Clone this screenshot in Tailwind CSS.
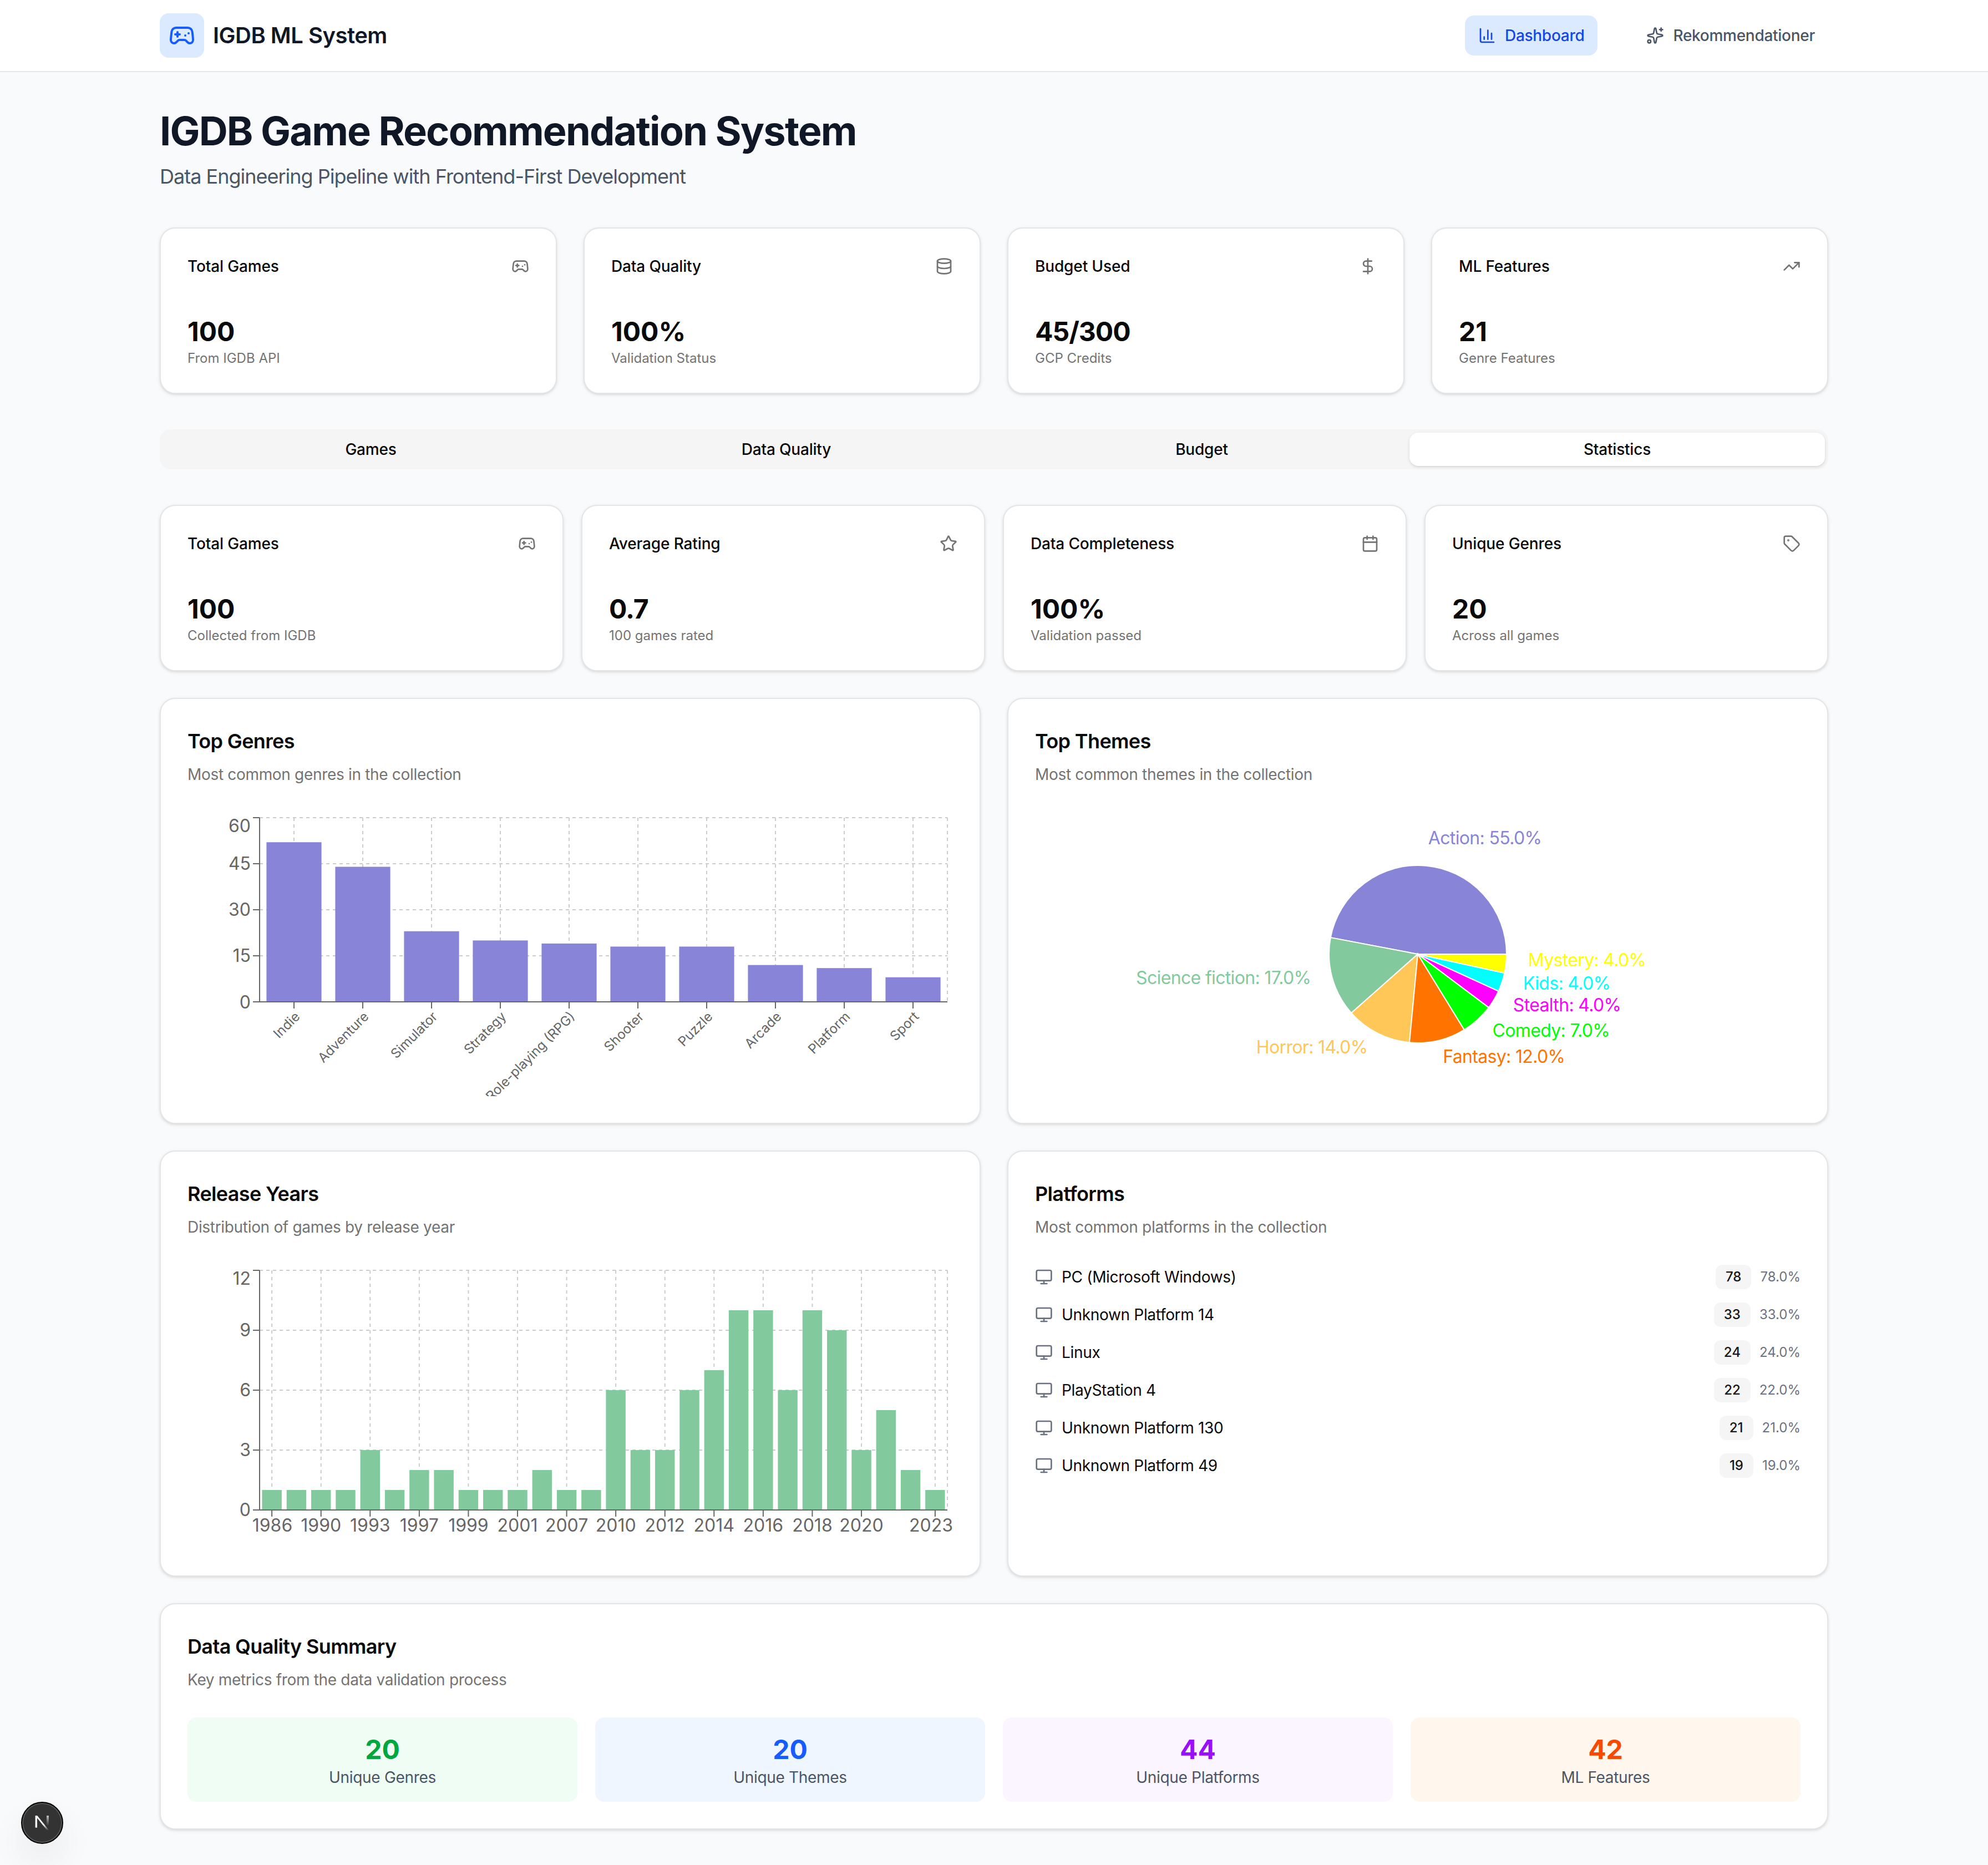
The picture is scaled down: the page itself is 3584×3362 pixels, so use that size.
<!DOCTYPE html>
<html lang="en" class="[zoom:2] [font-family:Inter,'Noto_Sans',sans-serif]">
<head>
<meta charset="utf-8">
<title>IGDB ML System</title>
<script src="https://cdn.jsdelivr.net/npm/@tailwindcss/browser@4"></script>
</head>
<body class="bg-gray-50 text-[#0a0a0a]">
<nav class="bg-white border-b border-gray-200">
  <div class="mx-[144px] h-16 flex items-center justify-between">
    <div class="flex items-center gap-2">
      <div class="p-2 rounded-lg bg-blue-100 text-blue-600">
        <svg class="w-6 h-6" viewBox="0 0 24 24" fill="none" stroke="currentColor" stroke-width="2" stroke-linecap="round" stroke-linejoin="round"><line x1="6" x2="10" y1="11" y2="11"/><line x1="8" x2="8" y1="9" y2="13"/><line x1="15" x2="15.01" y1="12" y2="12"/><line x1="18" x2="18.01" y1="10" y2="10"/><path d="M17.32 5H6.68a4 4 0 0 0-3.978 3.59c-.006.052-.01.101-.017.152C2.604 9.416 2 14.456 2 16a3 3 0 0 0 3 3c1 0 1.5-.5 2-1l1.414-1.414A2 2 0 0 1 9.828 16h4.344a2 2 0 0 1 1.414.586L17 18c.5.5 1 1 2 1a3 3 0 0 0 3-3c0-1.545-.604-6.584-.685-7.258-.007-.05-.011-.1-.017-.151A4 4 0 0 0 17.32 5z"/></svg>
      </div>
      <span class="text-xl font-semibold text-gray-900 tracking-[-0.25px]">IGDB ML System</span>
    </div>
    <div class="flex items-center gap-8">
      <div class="flex items-center gap-2 px-3 h-9 rounded-lg bg-blue-100 text-blue-700 text-sm font-medium tracking-[-0.14px]">
        <svg class="w-4 h-4" viewBox="0 0 24 24" fill="none" stroke="currentColor" stroke-width="2" stroke-linecap="round" stroke-linejoin="round"><path d="M3 3v16a2 2 0 0 0 2 2h16"/><path d="M18 17V9"/><path d="M13 17V5"/><path d="M8 17v-3"/></svg>
        <span>Dashboard</span>
      </div>
      <div class="flex items-center gap-2 px-3 h-9 rounded-lg text-gray-600 text-sm font-medium tracking-[-0.14px]">
        <svg class="w-4 h-4" viewBox="0 0 24 24" fill="none" stroke="currentColor" stroke-width="2" stroke-linecap="round" stroke-linejoin="round"><path d="M11.017 2.814a1 1 0 0 1 1.966 0l1.051 5.558a2 2 0 0 0 1.594 1.594l5.558 1.051a1 1 0 0 1 0 1.966l-5.558 1.051a2 2 0 0 0-1.594 1.594l-1.051 5.558a1 1 0 0 1-1.966 0l-1.051-5.558a2 2 0 0 0-1.594-1.594l-5.558-1.051a1 1 0 0 1 0-1.966l5.558-1.051a2 2 0 0 0 1.594-1.594z"/><path d="M20 2v4"/><path d="M22 4h-4"/><circle cx="4" cy="20" r="2"/></svg>
        <span>Rekommendationer</span>
      </div>
    </div>
  </div>
</nav>

<main class="mx-[144px] py-8">
  <h1 class="h-10 pt-px text-4xl font-bold tracking-tight text-gray-900">IGDB Game Recommendation System</h1>
  <p class="mt-2 text-lg text-gray-600 tracking-[-0.5px]">Data Engineering Pipeline with Frontend-First Development</p>

  <section class="mt-8 grid grid-cols-4 gap-6">
    <div class="bg-white border border-[#e5e5e5] rounded-[14px] shadow-sm py-6 flex flex-col gap-6">
      <div class="px-6 pb-2 flex items-center justify-between"><h3 class="text-sm font-medium tracking-[-0.07px]">Total Games</h3>
        <svg class="w-4 h-4 text-[#737373]" viewBox="0 0 24 24" fill="none" stroke="currentColor" stroke-width="2" stroke-linecap="round" stroke-linejoin="round"><line x1="6" x2="10" y1="11" y2="11"/><line x1="8" x2="8" y1="9" y2="13"/><line x1="15" x2="15.01" y1="12" y2="12"/><line x1="18" x2="18.01" y1="10" y2="10"/><path d="M17.32 5H6.68a4 4 0 0 0-3.978 3.59c-.006.052-.01.101-.017.152C2.604 9.416 2 14.456 2 16a3 3 0 0 0 3 3c1 0 1.5-.5 2-1l1.414-1.414A2 2 0 0 1 9.828 16h4.344a2 2 0 0 1 1.414.586L17 18c.5.5 1 1 2 1a3 3 0 0 0 3-3c0-1.545-.604-6.584-.685-7.258-.007-.05-.011-.1-.017-.151A4 4 0 0 0 17.32 5z"/></svg></div>
      <div class="px-6 pt-px -mb-px"><div class="text-2xl font-bold">100</div><p class="text-xs text-[#737373]">From IGDB API</p></div>
    </div>
    <div class="bg-white border border-[#e5e5e5] rounded-[14px] shadow-sm py-6 flex flex-col gap-6">
      <div class="px-6 pb-2 flex items-center justify-between"><h3 class="text-sm font-medium tracking-[-0.07px]">Data Quality</h3>
        <svg class="w-4 h-4 text-[#737373]" viewBox="0 0 24 24" fill="none" stroke="currentColor" stroke-width="2" stroke-linecap="round" stroke-linejoin="round"><ellipse cx="12" cy="5" rx="9" ry="3"/><path d="M3 5V19A9 3 0 0 0 21 19V5"/><path d="M3 12A9 3 0 0 0 21 12"/></svg></div>
      <div class="px-6 pt-px -mb-px"><div class="text-2xl font-bold">100%</div><p class="text-xs text-[#737373]">Validation Status</p></div>
    </div>
    <div class="bg-white border border-[#e5e5e5] rounded-[14px] shadow-sm py-6 flex flex-col gap-6">
      <div class="px-6 pb-2 flex items-center justify-between"><h3 class="text-sm font-medium tracking-[-0.07px]">Budget Used</h3>
        <svg class="w-4 h-4 text-[#737373]" viewBox="0 0 24 24" fill="none" stroke="currentColor" stroke-width="2" stroke-linecap="round" stroke-linejoin="round"><line x1="12" x2="12" y1="2" y2="22"/><path d="M17 5H9.5a3.5 3.5 0 0 0 0 7h5a3.5 3.5 0 0 1 0 7H6"/></svg></div>
      <div class="px-6 pt-px -mb-px"><div class="text-2xl font-bold tracking-[-0.5px]">45/300</div><p class="text-xs text-[#737373]">GCP Credits</p></div>
    </div>
    <div class="bg-white border border-[#e5e5e5] rounded-[14px] shadow-sm py-6 flex flex-col gap-6">
      <div class="px-6 pb-2 flex items-center justify-between"><h3 class="text-sm font-medium tracking-[-0.07px]">ML Features</h3>
        <svg class="w-4 h-4 text-[#737373]" viewBox="0 0 24 24" fill="none" stroke="currentColor" stroke-width="2" stroke-linecap="round" stroke-linejoin="round"><polyline points="22 7 13.5 15.5 8.5 10.5 2 17"/><polyline points="16 7 22 7 22 13"/></svg></div>
      <div class="px-6 pt-px -mb-px"><div class="text-2xl font-bold">21</div><p class="text-xs text-[#737373]">Genre Features</p></div>
    </div>
  </section>

  <div class="mt-8 h-9 p-[3px] grid grid-cols-4 rounded-[10px] bg-[#f5f5f5] text-sm font-medium tracking-[-0.1px]">
    <div class="flex items-center justify-center">Games</div>
    <div class="flex items-center justify-center">Data Quality</div>
    <div class="flex items-center justify-center">Budget</div>
    <div class="flex items-center justify-center rounded-lg bg-white shadow-sm">Statistics</div>
  </div>

  <section class="mt-8 grid grid-cols-4 gap-4">
    <div class="bg-white border border-[#e5e5e5] rounded-[14px] shadow-sm py-6 flex flex-col gap-6">
      <div class="px-6 pb-2 flex items-center justify-between"><h3 class="text-sm font-medium tracking-[-0.07px]">Total Games</h3>
        <svg class="w-4 h-4 text-[#737373]" viewBox="0 0 24 24" fill="none" stroke="currentColor" stroke-width="2" stroke-linecap="round" stroke-linejoin="round"><line x1="6" x2="10" y1="11" y2="11"/><line x1="8" x2="8" y1="9" y2="13"/><line x1="15" x2="15.01" y1="12" y2="12"/><line x1="18" x2="18.01" y1="10" y2="10"/><path d="M17.32 5H6.68a4 4 0 0 0-3.978 3.59c-.006.052-.01.101-.017.152C2.604 9.416 2 14.456 2 16a3 3 0 0 0 3 3c1 0 1.5-.5 2-1l1.414-1.414A2 2 0 0 1 9.828 16h4.344a2 2 0 0 1 1.414.586L17 18c.5.5 1 1 2 1a3 3 0 0 0 3-3c0-1.545-.604-6.584-.685-7.258-.007-.05-.011-.1-.017-.151A4 4 0 0 0 17.32 5z"/></svg></div>
      <div class="px-6 pt-px -mb-px"><div class="text-2xl font-bold">100</div><p class="text-xs text-[#737373]">Collected from IGDB</p></div>
    </div>
    <div class="bg-white border border-[#e5e5e5] rounded-[14px] shadow-sm py-6 flex flex-col gap-6">
      <div class="px-6 pb-2 flex items-center justify-between"><h3 class="text-sm font-medium tracking-[-0.07px]">Average Rating</h3>
        <svg class="w-4 h-4 text-[#737373]" viewBox="0 0 24 24" fill="none" stroke="currentColor" stroke-width="2" stroke-linecap="round" stroke-linejoin="round"><path d="M11.525 2.295a.53.53 0 0 1 .95 0l2.31 4.679a2.123 2.123 0 0 0 1.595 1.16l5.166.756a.53.53 0 0 1 .294.904l-3.736 3.638a2.123 2.123 0 0 0-.611 1.878l.882 5.14a.53.53 0 0 1-.771.56l-4.618-2.428a2.122 2.122 0 0 0-1.973 0L6.396 21.01a.53.53 0 0 1-.77-.56l.881-5.139a2.122 2.122 0 0 0-.611-1.879L2.16 9.795a.53.53 0 0 1 .294-.906l5.165-.755a2.122 2.122 0 0 0 1.597-1.16z"/></svg></div>
      <div class="px-6 pt-px -mb-px"><div class="text-2xl font-bold tracking-[-0.5px]">0.7</div><p class="text-xs text-[#737373]">100 games rated</p></div>
    </div>
    <div class="bg-white border border-[#e5e5e5] rounded-[14px] shadow-sm py-6 flex flex-col gap-6">
      <div class="px-6 pb-2 flex items-center justify-between"><h3 class="text-sm font-medium tracking-[-0.07px]">Data Completeness</h3>
        <svg class="w-4 h-4 text-[#737373]" viewBox="0 0 24 24" fill="none" stroke="currentColor" stroke-width="2" stroke-linecap="round" stroke-linejoin="round"><path d="M8 2v4"/><path d="M16 2v4"/><rect width="18" height="18" x="3" y="4" rx="2"/><path d="M3 10h18"/></svg></div>
      <div class="px-6 pt-px -mb-px"><div class="text-2xl font-bold">100%</div><p class="text-xs text-[#737373]">Validation passed</p></div>
    </div>
    <div class="bg-white border border-[#e5e5e5] rounded-[14px] shadow-sm py-6 flex flex-col gap-6">
      <div class="px-6 pb-2 flex items-center justify-between"><h3 class="text-sm font-medium tracking-[-0.07px]">Unique Genres</h3>
        <svg class="w-4 h-4 text-[#737373]" viewBox="0 0 24 24" fill="none" stroke="currentColor" stroke-width="2" stroke-linecap="round" stroke-linejoin="round"><path d="M12.586 2.586A2 2 0 0 0 11.172 2H4a2 2 0 0 0-2 2v7.172a2 2 0 0 0 .586 1.414l8.704 8.704a2.426 2.426 0 0 0 3.42 0l6.58-6.58a2.426 2.426 0 0 0 0-3.42z"/><circle cx="7.5" cy="7.5" r=".5" fill="currentColor"/></svg></div>
      <div class="px-6 pt-px -mb-px"><div class="text-2xl font-bold">20</div><p class="text-xs text-[#737373]">Across all games</p></div>
    </div>
  </section>

  <section class="mt-6 grid grid-cols-2 gap-6">
    <div class="bg-white border border-[#e5e5e5] rounded-[14px] shadow-sm py-6 flex flex-col gap-6">
      <div class="px-6 flex flex-col gap-1.5">
        <h3 class="text-lg font-semibold tracking-[-0.32px]">Top Genres</h3>
        <p class="text-sm text-[#737373] tracking-[-0.16px]">Most common genres in the collection</p>
      </div>
      <div class="px-6">
        <svg class="block w-full h-64" viewBox="0 0 690 256" font-size="16" fill="#666">
          <g stroke="#ccc" stroke-dasharray="3 3" fill="none">
            <path d="M65 129.5H685M65 88H685M65 46.5H685M65 5H685"/>
            <path d="M96 5V171M158 5V171M220 5V171M282 5V171M344 5V171M406 5V171M468 5V171M530 5V171M592 5V171M654 5V171M685 5V171"/>
          </g>
          <g fill="#8884d8">
            <rect x="71.2" y="27.13" width="49.6" height="143.87"/>
            <rect x="133.2" y="49.27" width="49.6" height="121.73"/>
            <rect x="195.2" y="107.37" width="49.6" height="63.63"/>
            <rect x="257.2" y="115.67" width="49.6" height="55.33"/>
            <rect x="319.2" y="118.43" width="49.6" height="52.57"/>
            <rect x="381.2" y="121.2" width="49.6" height="49.8"/>
            <rect x="443.2" y="121.2" width="49.6" height="49.8"/>
            <rect x="505.2" y="137.8" width="49.6" height="33.2"/>
            <rect x="567.2" y="140.57" width="49.6" height="30.43"/>
            <rect x="629.2" y="148.87" width="49.6" height="22.13"/>
          </g>
          <g stroke="#666" fill="none">
            <path d="M65 5V171H685"/>
            <path d="M59 5H65M59 46.5H65M59 88H65M59 129.5H65M59 171H65"/>
            <path d="M96 171V177M158 171V177M220 171V177M282 171V177M344 171V177M406 171V177M468 171V177M530 171V177M592 171V177M654 171V177"/>
          </g>
          <g text-anchor="end">
            <text x="57" y="18">60</text>
            <text x="57" y="52.2">45</text>
            <text x="57" y="93.7">30</text>
            <text x="57" y="135.2">15</text>
            <text x="57" y="177">0</text>
          </g>
          <g text-anchor="end" font-size="12">
            <text x="96" y="179" dy="8.52" transform="rotate(-45 96 179)">Indie</text>
            <text x="158" y="179" dy="8.52" transform="rotate(-45 158 179)">Adventure</text>
            <text x="220" y="179" dy="8.52" transform="rotate(-45 220 179)">Simulator</text>
            <text x="282" y="179" dy="8.52" transform="rotate(-45 282 179)">Strategy</text>
            <text x="344" y="179" dy="8.52" transform="rotate(-45 344 179)">Role-playing (RPG)</text>
            <text x="406" y="179" dy="8.52" transform="rotate(-45 406 179)">Shooter</text>
            <text x="468" y="179" dy="8.52" transform="rotate(-45 468 179)">Puzzle</text>
            <text x="530" y="179" dy="8.52" transform="rotate(-45 530 179)">Arcade</text>
            <text x="592" y="179" dy="8.52" transform="rotate(-45 592 179)">Platform</text>
            <text x="654" y="179" dy="8.52" transform="rotate(-45 654 179)">Sport</text>
          </g>
        </svg>
      </div>
    </div>

    <div class="bg-white border border-[#e5e5e5] rounded-[14px] shadow-sm py-6 flex flex-col gap-6">
      <div class="px-6 flex flex-col gap-1.5">
        <h3 class="text-lg font-semibold tracking-[-0.32px]">Top Themes</h3>
        <p class="text-sm text-[#737373] tracking-[-0.16px]">Most common themes in the collection</p>
      </div>
      <div class="px-6">
        <svg class="block w-full h-64" viewBox="0 0 690 256" font-size="16">
          <g stroke="#fff">
            <path fill="#8884d8" d="M345 128L425 128A80 80 0 0 0 266.41 113.06Z"/>
            <path fill="#82ca9d" d="M345 128L266.41 113.06A80 80 0 0 0 285.12 181.05Z"/>
            <path fill="#ffc658" d="M345 128L285.12 181.05A80 80 0 0 0 337.5 207.65Z"/>
            <path fill="#ff7300" d="M345 128L337.5 207.65A80 80 0 0 0 386.86 196.17Z"/>
            <path fill="#00ff00" d="M345 128L386.86 196.17A80 80 0 0 0 408.96 176.06Z"/>
            <path fill="#ff00ff" d="M345 128L408.96 176.06A80 80 0 0 0 417.72 161.33Z"/>
            <path fill="#00ffff" d="M345 128L417.72 161.33A80 80 0 0 0 423.16 145.06Z"/>
            <path fill="#ffff00" d="M345 128L423.16 145.06A80 80 0 0 0 425 128Z"/>
          </g>
          <g class="tracking-[-0.33px]">
            <text x="354.4" y="28.9" fill="#8884d8">Action: 55.0%</text>
            <text x="248.6" y="155" fill="#82ca9d" text-anchor="end">Science fiction: 17.0%</text>
            <text x="299.7" y="217.7" fill="#ffc658" text-anchor="end">Horror: 14.0%</text>
            <text x="367.6" y="225.9" fill="#ff7300">Fantasy: 12.0%</text>
            <text x="412.3" y="202.5" fill="#00ff00">Comedy: 7.0%</text>
            <text x="430.9" y="179.7" fill="#ff00ff">Stealth: 4.0%</text>
            <text x="439.9" y="160.2" fill="#00ffff">Kids: 4.0%</text>
            <text x="444.4" y="139.2" fill="#ffff00">Mystery: 4.0%</text>
          </g>
        </svg>
      </div>
    </div>

    <div class="bg-white border border-[#e5e5e5] rounded-[14px] shadow-sm py-6 flex flex-col gap-6">
      <div class="px-6 flex flex-col gap-1.5">
        <h3 class="text-lg font-semibold tracking-[-0.32px]">Release Years</h3>
        <p class="text-sm text-[#737373] tracking-[-0.16px]">Distribution of games by release year</p>
      </div>
      <div class="px-6">
        <svg class="block w-full h-64" viewBox="0 0 690 256" font-size="16" fill="#666">
          <g stroke="#ccc" stroke-dasharray="3 3" fill="none">
            <path d="M65 167H685M65 113H685M65 59H685M65 5H685"/>
            <path d="M76.07 5V221M120.36 5V221M164.64 5V221M208.93 5V221M253.21 5V221M297.5 5V221M341.79 5V221M386.07 5V221M430.36 5V221M474.64 5V221M518.93 5V221M563.21 5V221M607.5 5V221M673.93 5V221M685 5V221"/>
          </g>
          <g fill="#82ca9d">
            <rect x="67.21" y="203" width="17.71" height="18"/>
            <rect x="89.36" y="203" width="17.71" height="18"/>
            <rect x="111.5" y="203" width="17.71" height="18"/>
            <rect x="133.64" y="203" width="17.71" height="18"/>
            <rect x="155.79" y="167" width="17.71" height="54"/>
            <rect x="177.93" y="203" width="17.71" height="18"/>
            <rect x="200.07" y="185" width="17.71" height="36"/>
            <rect x="222.21" y="185" width="17.71" height="36"/>
            <rect x="244.36" y="203" width="17.71" height="18"/>
            <rect x="266.5" y="203" width="17.71" height="18"/>
            <rect x="288.64" y="203" width="17.71" height="18"/>
            <rect x="310.79" y="185" width="17.71" height="36"/>
            <rect x="332.93" y="203" width="17.71" height="18"/>
            <rect x="355.07" y="203" width="17.71" height="18"/>
            <rect x="377.21" y="113" width="17.71" height="108"/>
            <rect x="399.36" y="167" width="17.71" height="54"/>
            <rect x="421.5" y="167" width="17.71" height="54"/>
            <rect x="443.64" y="113" width="17.71" height="108"/>
            <rect x="465.79" y="95" width="17.71" height="126"/>
            <rect x="487.93" y="41" width="17.71" height="180"/>
            <rect x="510.07" y="41" width="17.71" height="180"/>
            <rect x="532.21" y="113" width="17.71" height="108"/>
            <rect x="554.36" y="41" width="17.71" height="180"/>
            <rect x="576.5" y="59" width="17.71" height="162"/>
            <rect x="598.64" y="167" width="17.71" height="54"/>
            <rect x="620.79" y="131" width="17.71" height="90"/>
            <rect x="642.93" y="185" width="17.71" height="36"/>
            <rect x="665.07" y="203" width="17.71" height="18"/>
          </g>
          <g stroke="#666" fill="none">
            <path d="M65 5V221H685"/>
            <path d="M59 5H65M59 59H65M59 113H65M59 167H65M59 221H65"/>
            <path d="M76.07 221V227M120.36 221V227M164.64 221V227M208.93 221V227M253.21 221V227M297.5 221V227M341.79 221V227M386.07 221V227M430.36 221V227M474.64 221V227M518.93 221V227M563.21 221V227M607.5 221V227M673.93 221V227"/>
          </g>
          <g text-anchor="end">
            <text x="57" y="18.2">12</text>
            <text x="57" y="64.7">9</text>
            <text x="57" y="118.7">6</text>
            <text x="57" y="172.7">3</text>
            <text x="57" y="226.7">0</text>
          </g>
          <g text-anchor="middle">
            <text x="76.5" y="240.4">1986</text>
            <text x="120.36" y="240.4">1990</text>
            <text x="164.64" y="240.4">1993</text>
            <text x="208.93" y="240.4">1997</text>
            <text x="253.21" y="240.4">1999</text>
            <text x="297.5" y="240.4">2001</text>
            <text x="341.79" y="240.4">2007</text>
            <text x="386.07" y="240.4">2010</text>
            <text x="430.36" y="240.4">2012</text>
            <text x="474.64" y="240.4">2014</text>
            <text x="518.93" y="240.4">2016</text>
            <text x="563.21" y="240.4">2018</text>
            <text x="607.5" y="240.4">2020</text>
            <text x="690" y="240.4" text-anchor="end">2023</text>
          </g>
        </svg>
      </div>
    </div>

    <div class="bg-white border border-[#e5e5e5] rounded-[14px] shadow-sm py-6 flex flex-col gap-6">
      <div class="px-6 flex flex-col gap-1.5">
        <h3 class="text-lg font-semibold tracking-[-0.32px]">Platforms</h3>
        <p class="text-sm text-[#737373] tracking-[-0.16px]">Most common platforms in the collection</p>
      </div>
      <ul class="px-6 flex flex-col gap-3">
        <li class="flex items-center justify-between">
          <div class="flex items-center gap-2"><svg class="w-4 h-4 text-gray-500" viewBox="0 0 24 24" fill="none" stroke="currentColor" stroke-width="2" stroke-linecap="round" stroke-linejoin="round"><rect width="20" height="14" x="2" y="3" rx="2"/><line x1="8" x2="16" y1="21" y2="21"/><line x1="12" x2="12" y1="17" y2="21"/></svg><span class="text-sm tracking-[-0.16px]">PC (Microsoft Windows)</span></div>
          <div class="flex items-center gap-2"><span class="px-2 py-0.5 border border-transparent rounded-md bg-[#f5f5f5] text-[#171717] text-xs font-medium">78</span><span class="text-xs text-gray-500">78.0%</span></div>
        </li>
        <li class="flex items-center justify-between">
          <div class="flex items-center gap-2"><svg class="w-4 h-4 text-gray-500" viewBox="0 0 24 24" fill="none" stroke="currentColor" stroke-width="2" stroke-linecap="round" stroke-linejoin="round"><rect width="20" height="14" x="2" y="3" rx="2"/><line x1="8" x2="16" y1="21" y2="21"/><line x1="12" x2="12" y1="17" y2="21"/></svg><span class="text-sm tracking-[-0.16px]">Unknown Platform 14</span></div>
          <div class="flex items-center gap-2"><span class="px-2 py-0.5 border border-transparent rounded-md bg-[#f5f5f5] text-[#171717] text-xs font-medium">33</span><span class="text-xs text-gray-500">33.0%</span></div>
        </li>
        <li class="flex items-center justify-between">
          <div class="flex items-center gap-2"><svg class="w-4 h-4 text-gray-500" viewBox="0 0 24 24" fill="none" stroke="currentColor" stroke-width="2" stroke-linecap="round" stroke-linejoin="round"><rect width="20" height="14" x="2" y="3" rx="2"/><line x1="8" x2="16" y1="21" y2="21"/><line x1="12" x2="12" y1="17" y2="21"/></svg><span class="text-sm tracking-[-0.16px]">Linux</span></div>
          <div class="flex items-center gap-2"><span class="px-2 py-0.5 border border-transparent rounded-md bg-[#f5f5f5] text-[#171717] text-xs font-medium">24</span><span class="text-xs text-gray-500">24.0%</span></div>
        </li>
        <li class="flex items-center justify-between">
          <div class="flex items-center gap-2"><svg class="w-4 h-4 text-gray-500" viewBox="0 0 24 24" fill="none" stroke="currentColor" stroke-width="2" stroke-linecap="round" stroke-linejoin="round"><rect width="20" height="14" x="2" y="3" rx="2"/><line x1="8" x2="16" y1="21" y2="21"/><line x1="12" x2="12" y1="17" y2="21"/></svg><span class="text-sm tracking-[-0.16px]">PlayStation 4</span></div>
          <div class="flex items-center gap-2"><span class="px-2 py-0.5 border border-transparent rounded-md bg-[#f5f5f5] text-[#171717] text-xs font-medium">22</span><span class="text-xs text-gray-500">22.0%</span></div>
        </li>
        <li class="flex items-center justify-between">
          <div class="flex items-center gap-2"><svg class="w-4 h-4 text-gray-500" viewBox="0 0 24 24" fill="none" stroke="currentColor" stroke-width="2" stroke-linecap="round" stroke-linejoin="round"><rect width="20" height="14" x="2" y="3" rx="2"/><line x1="8" x2="16" y1="21" y2="21"/><line x1="12" x2="12" y1="17" y2="21"/></svg><span class="text-sm tracking-[-0.16px]">Unknown Platform 130</span></div>
          <div class="flex items-center gap-2"><span class="px-2 py-0.5 border border-transparent rounded-md bg-[#f5f5f5] text-[#171717] text-xs font-medium">21</span><span class="text-xs text-gray-500">21.0%</span></div>
        </li>
        <li class="flex items-center justify-between">
          <div class="flex items-center gap-2"><svg class="w-4 h-4 text-gray-500" viewBox="0 0 24 24" fill="none" stroke="currentColor" stroke-width="2" stroke-linecap="round" stroke-linejoin="round"><rect width="20" height="14" x="2" y="3" rx="2"/><line x1="8" x2="16" y1="21" y2="21"/><line x1="12" x2="12" y1="17" y2="21"/></svg><span class="text-sm tracking-[-0.16px]">Unknown Platform 49</span></div>
          <div class="flex items-center gap-2"><span class="px-2 py-0.5 border border-transparent rounded-md bg-[#f5f5f5] text-[#171717] text-xs font-medium">19</span><span class="text-xs text-gray-500">19.0%</span></div>
        </li>
      </ul>
    </div>
  </section>

  <section class="mt-6 bg-white border border-[#e5e5e5] rounded-[14px] shadow-sm py-6 flex flex-col gap-6">
    <div class="px-6 flex flex-col gap-1.5">
      <h3 class="text-lg font-semibold tracking-[-0.32px]">Data Quality Summary</h3>
      <p class="text-sm text-[#737373] tracking-[-0.16px]">Key metrics from the data validation process</p>
    </div>
    <div class="px-6 grid grid-cols-4 gap-4 text-center">
      <div class="p-3 rounded-lg bg-green-50"><div class="h-8 pt-px text-2xl font-bold text-green-600">20</div><div class="text-sm text-gray-600 tracking-[-0.16px]">Unique Genres</div></div>
      <div class="p-3 rounded-lg bg-blue-50"><div class="h-8 pt-px text-2xl font-bold text-blue-600">20</div><div class="text-sm text-gray-600 tracking-[-0.16px]">Unique Themes</div></div>
      <div class="p-3 rounded-lg bg-purple-50"><div class="h-8 pt-px text-2xl font-bold text-purple-600">44</div><div class="text-sm text-gray-600 tracking-[-0.16px]">Unique Platforms</div></div>
      <div class="p-3 rounded-lg bg-orange-50"><div class="h-8 pt-px text-2xl font-bold text-orange-600">42</div><div class="text-sm text-gray-600 tracking-[-0.16px]">ML Features</div></div>
    </div>
  </section>
</main>

<div class="fixed left-[19px] bottom-[19px] w-[38px] h-[38px] rounded-full bg-[#333] border border-black shadow-[inset_0_0_0_1px_#555,0_16px_32px_rgba(0,0,0,0.07)] flex items-center justify-center">
  <svg class="w-4 h-4" viewBox="0 0 16 16"><defs><linearGradient id="nfade" x1="0" y1="0" x2="0" y2="1"><stop offset="0.6" stop-color="#fff"/><stop offset="1" stop-color="#fff" stop-opacity="0"/></linearGradient><linearGradient id="nfade2" x1="0" y1="0" x2="0" y2="1"><stop offset="0" stop-color="#fff" stop-opacity="0.7"/><stop offset="1" stop-color="#fff" stop-opacity="0"/></linearGradient></defs><path fill="#fff" d="M1.8 1.5H3.5V12.3H1.8Z"/><path fill="url(#nfade)" d="M1.8 1.5H3.6L14.2 14.8H12.4Z"/><path fill="url(#nfade2)" d="M12 1.5H14V10.5H12Z"/></svg>
</div>
</body>
</html>
